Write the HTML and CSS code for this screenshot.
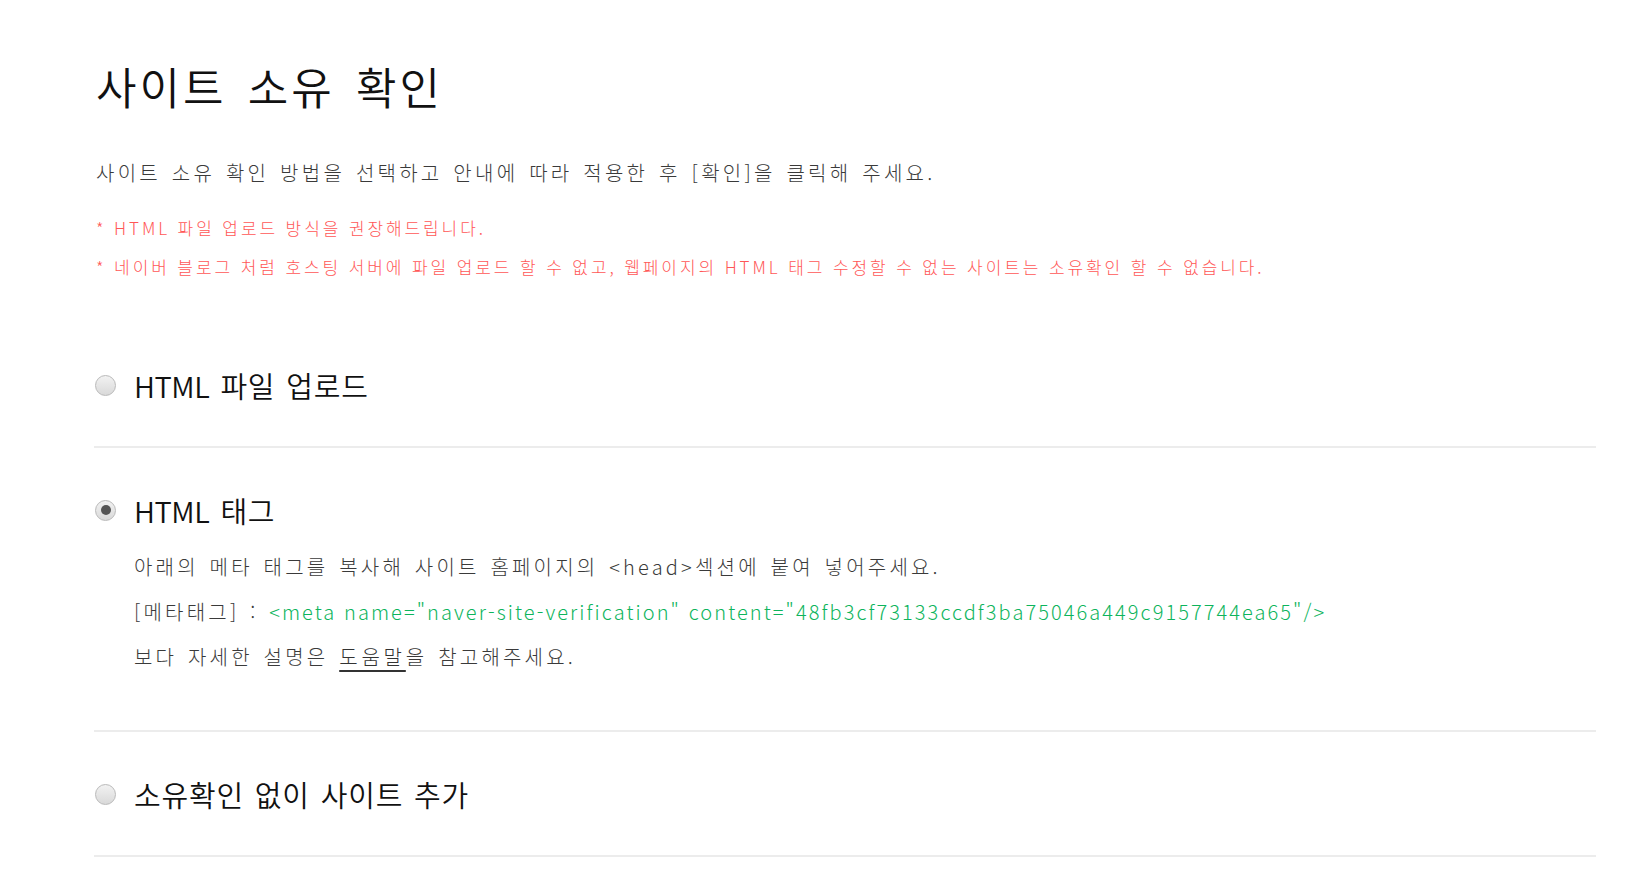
FILE: index.html
```html
<!DOCTYPE html>
<html lang="ko">
<head>
<meta charset="utf-8">
<title>사이트 소유 확인</title>
<link rel="stylesheet" href="styles.css">
</head>
<body>
<div class="page">
  <h1 class="title">사이트 소유 확인</h1>
  <p class="desc">사이트 소유 확인 방법을 선택하고 안내에 따라 적용한 후 [확인]을 클릭해 주세요.</p>
  <ul class="notes">
    <li>* HTML 파일 업로드 방식을 권장해드립니다.</li>
    <li>* 네이버 블로그 처럼 호스팅 서버에 파일 업로드 할 수 없고, 웹페이지의 HTML 태그 수정할 수 없는 사이트는 소유확인 할 수 없습니다.</li>
  </ul>

  <div class="options">
    <div class="option">
      <div class="option-row"><span class="radio"></span><span class="label"><span class="latin">HTML</span> 파일 업로드</span></div>
    </div>
    <div class="option">
      <div class="option-row"><span class="radio checked"></span><span class="label"><span class="latin">HTML</span> 태그</span></div>
      <div class="detail">
        <p>아래의 메타 태그를 복사해 사이트 홈페이지의 &lt;head&gt;섹션에 붙여 넣어주세요.</p>
        <p>[메타태그] : <span class="code">&lt;meta name="naver-site-verification" content="48fb3cf73133ccdf3ba75046a449c9157744ea65"/&gt;</span></p>
        <p>보다 자세한 설명은 <a class="help" href="#">도움말</a>을 참고해주세요.</p>
      </div>
    </div>
    <div class="option">
      <div class="option-row"><span class="radio"></span><span class="label">소유확인 없이 사이트 추가</span></div>
    </div>
  </div>
</div>
</body>
</html>
```

FILE: styles.css
```css
html, body {
  margin: 0;
  padding: 0;
  background: #ffffff;
}

body {
  font-family: "Noto Sans CJK KR", "Noto Sans", sans-serif;
  color: #3a3a3a;
}

.page {
  padding: 58px 47px 0 94px;
}

.title {
  margin: 0;
  font-size: 44px;
  font-weight: 350;
  line-height: 56px;
  letter-spacing: 3px;
  word-spacing: 6px;
  color: #111;
  padding-left: 2px;
}

.desc {
  margin: 44px 0 0 2px;
  font-size: 20px;
  font-weight: 300;
  line-height: 30px;
  letter-spacing: 3.25px;
  word-spacing: 2px;
  color: #3a3a3a;
}

.notes {
  list-style: none;
  margin: 20px 0 0 2px;
  padding: 0;
}

.notes li {
  font-size: 17px;
  font-weight: 300;
  line-height: 39px;
  letter-spacing: 2.9px;
  color: #ff5757;
}

.options {
  margin-top: 79px;
}

.option {
  border-bottom: 2px solid #ececec;
  padding: 42px 0 41px 0;
}

.option:first-child {
  padding-top: 0;
}

.option-row {
  display: flex;
  align-items: center;
  height: 40px;
}

.radio {
  box-sizing: border-box;
  width: 21px;
  height: 21px;
  margin-left: 1px;
  border-radius: 50%;
  border: 1px solid #b9b9b9;
  background: linear-gradient(#f2f2f2, #d9d9d9);
  display: flex;
  align-items: center;
  justify-content: center;
  flex: none;
}

.radio.checked::after {
  content: "";
  width: 10px;
  height: 10px;
  border-radius: 50%;
  background: #555;
}

.label {
  margin-left: 18px;
  font-size: 29px;
  font-weight: 350;
  letter-spacing: 0.8px;
  word-spacing: 2px;
  color: #111;
}

.label .latin {
  letter-spacing: -0.4px;
}

.detail {
  margin: 14px 0 10px 40px;
}

.detail p {
  margin: 0;
  font-size: 20px;
  font-weight: 300;
  line-height: 45px;
  letter-spacing: 3.2px;
  word-spacing: 2px;
  color: #3a3a3a;
}

.code {
  color: #0db45c;
  letter-spacing: 2.07px;
  word-spacing: 0;
}

.help {
  color: #333;
  letter-spacing: 3.8px;
  text-decoration: underline;
  text-decoration-thickness: 2px;
  text-underline-offset: 5px;
}
```
